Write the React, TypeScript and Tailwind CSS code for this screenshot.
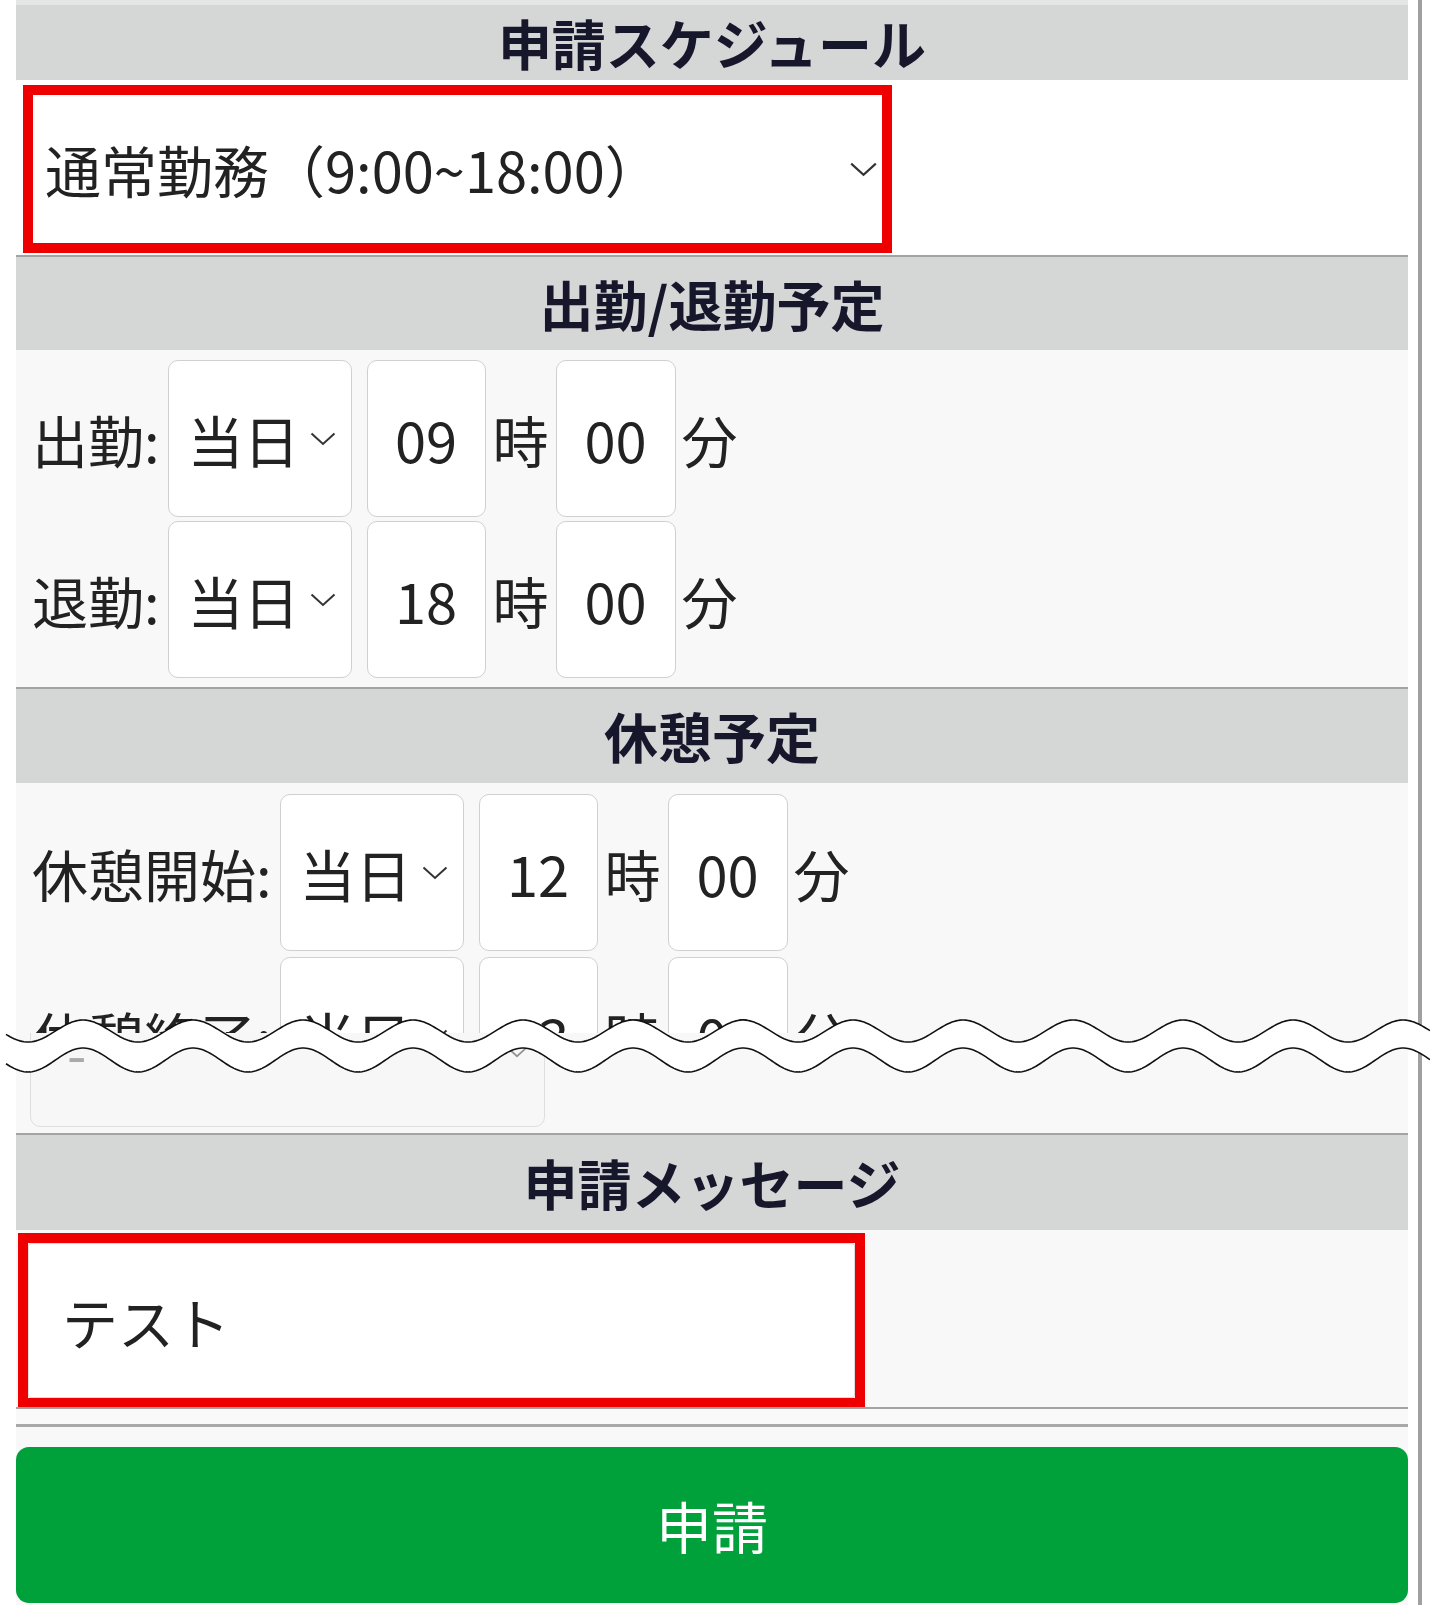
import React from 'react'

const FONT = { fontFamily: '"Noto Sans CJK JP", "Noto Sans", sans-serif' }

// wave band that marks the skipped part of the screen
const wavePoints = (c: number, a: number) => {
  const pts: string[] = []
  for (let x = 6; x <= 1430; x += 2) {
    const y = c - a * Math.cos((2 * Math.PI * (x - 83)) / 110)
    pts.push(`${x},${y.toFixed(2)}`)
  }
  return pts
}

function Chevron({ className }: { className?: string }) {
  return (
    <svg viewBox="0 0 26 14" className={className} fill="none">
      <polyline points="1.5,1.5 13,12 24.5,1.5" stroke="#333" strokeWidth="2" />
    </svg>
  )
}

function SectionHeader({ title, h }: { title: string; h: string }) {
  return (
    <div className={`flex items-center justify-center bg-[#d5d7d7] ${h}`}>
      <span className="text-[54px] font-bold leading-none text-[#17172b]">{title}</span>
    </div>
  )
}

function Rule() {
  return <div className="h-[2px] bg-[#a3a3a3]" />
}

interface TimeRowProps {
  label: string
  hour: string
  minute: string
}

function TimeRow({ label, hour, minute }: TimeRowProps) {
  return (
    <div className="flex h-[157px] shrink-0 items-center text-[56px] leading-none text-[#222]">
      <span className="mr-[8px]">{label}</span>
      <div className="flex h-full w-[184px] items-center justify-between rounded-[10px] border-[1.5px] border-[#d0d0d0] bg-white pl-[19px] pr-[15px]">
        <span>当日</span>
        <Chevron className="h-[14px] w-[26px]" />
      </div>
      <div className="ml-[15px] flex h-full w-[119px] items-center justify-center rounded-[10px] border-[1.5px] border-[#d0d0d0] bg-white">
        {hour}
      </div>
      <span className="mx-[7px]">時</span>
      <div className="flex h-full w-[120px] items-center justify-center rounded-[10px] border-[1.5px] border-[#d0d0d0] bg-white">
        {minute}
      </div>
      <span className="ml-[6px]">分</span>
    </div>
  )
}

export default function App() {
  const top = wavePoints(15, 11)
  const bottom = wavePoints(44, 12)
  const fill = `M${top.join(' L')} L${[...bottom].reverse().join(' L')} Z`

  return (
    <div className="relative flex h-[1605px] w-[1430px] overflow-hidden bg-white" style={FONT}>
      <div className="w-[16px] shrink-0" />

      <div className="flex w-[1392px] shrink-0 flex-col bg-[#f8f8f8]">
        <div className="h-[5px] bg-[#e4e5e5]" />
        <SectionHeader title="申請スケジュール" h="h-[75px]" />

        {/* schedule select */}
        <div className="h-[175px] bg-white pl-[7px] pt-[5px]">
          <div className="h-[168px] w-[869px] border-[10px] border-[#ee0000]">
            <div className="flex h-full items-center justify-between bg-white pl-[12px] pr-[4px] text-[56px] leading-none text-[#222]">
              <span>通常勤務（9:00~18:00）</span>
              <Chevron className="h-[15px] w-[29px]" />
            </div>
          </div>
        </div>
        <Rule />

        <SectionHeader title="出勤/退勤予定" h="h-[93px]" />
        <div className="flex h-[337px] flex-col gap-[4px] pl-[16px] pt-[10px]">
          <TimeRow label="出勤:" hour="09" minute="00" />
          <TimeRow label="退勤:" hour="18" minute="00" />
        </div>
        <Rule />

        <SectionHeader title="休憩予定" h="h-[94px]" />
        <div className="flex h-[250px] flex-col gap-[6px] overflow-hidden pl-[16px] pt-[11px]">
          <TimeRow label="休憩開始:" hour="12" minute="00" />
          <TimeRow label="休憩終了:" hour="13" minute="00" />
        </div>

        {/* part below the skipped area */}
        <div className="h-[100px] overflow-hidden pl-[14px]">
          <div className="-mt-[56px] flex h-[150px] w-[515px] items-center justify-between rounded-[10px] border-[1.5px] border-[#dedede] bg-[#f7f7f7] pl-[36px] pr-[16px] text-[56px] leading-none text-[#aaa]">
            <span>-</span>
            <Chevron className="h-[12px] w-[22px] opacity-50" />
          </div>
        </div>
        <Rule />

        <SectionHeader title="申請メッセージ" h="h-[95px]" />
        <div className="h-[177px] pl-[2px] pt-[3px]">
          <div className="h-[175px] w-[847px] border-[10px] border-[#ee0000]">
            <div className="flex h-full items-center rounded-[3px] border border-[#dcdcdc] bg-white pl-[33px] text-[56px] leading-none text-[#222]">
              テスト
            </div>
          </div>
        </div>
        <Rule />
        <div className="h-[15px] bg-[#f9f9f9]" />
        <div className="h-[3px] bg-[#a8a8a8]" />
        <div className="h-[20px]" />

        <button className="flex h-[156px] items-center justify-center rounded-[13px] bg-[#00a03a] text-[56px] leading-none text-white">
          申請
        </button>
      </div>

      <div className="w-[10px] shrink-0" />
      <div className="h-full w-[4px] shrink-0 bg-[#a0a0a0]" />

      <svg className="absolute left-0 top-[1016px] h-[60px] w-[1430px]" viewBox="0 0 1430 60">
        <path d={fill} fill="#fff" />
        <polyline points={top.join(' ')} fill="none" stroke="#111" strokeWidth="1.6" />
        <polyline points={bottom.join(' ')} fill="none" stroke="#111" strokeWidth="1.6" />
      </svg>
    </div>
  )
}
